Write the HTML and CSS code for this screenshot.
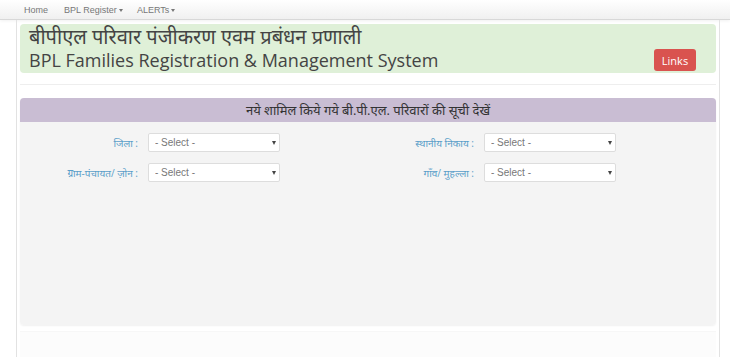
FILE: index.html
```html
<!DOCTYPE html>
<html lang="hi">
<head>
  <meta charset="UTF-8" />
  <title>BPL Families Registration &amp; Management System</title>
  <meta name="viewport" content="width=device-width, initial-scale=1.0">
  <link rel="stylesheet" href="styles.css">
</head>
<body>

  <nav class="navbar">
    <a href="#" class="nav-home">Home</a>
    <a href="#" class="nav-bpl">BPL Register<span class="caret"></span></a>
    <a href="#">ALERTs<span class="caret"></span></a>
  </nav>

  <div class="container">
    <div class="banner">
      <div class="titles">
        <div class="title-hi">बीपीएल परिवार पंजीकरण एवम प्रबंधन प्रणाली</div>
        <div class="title-en">BPL Families Registration &amp; Management System</div>
      </div>
      <button class="btn-links">Links</button>
    </div>

    <hr>

    <div class="panel">
      <div class="panel-heading">नये शामिल किये गये बी.पी.एल. परिवारों की सूची देखें</div>
      <div class="panel-body">
        <div class="form-grid">
          <label>जिला :</label>
          <div class="select-wrap"><select><option>- Select -</option></select></div>
          <label>स्थानीय निकाय :</label>
          <div class="select-wrap"><select><option>- Select -</option></select></div>

          <label>ग्राम-पंचायत/ ज़ोन :</label>
          <div class="select-wrap"><select><option>- Select -</option></select></div>
          <label>गाँव/ मुहल्ला :</label>
          <div class="select-wrap"><select><option>- Select -</option></select></div>
        </div>
      </div>
    </div>

    <div class="footer-well"></div>
  </div>

</body>
</html>
```

FILE: styles.css
```css
body {
  margin: 0;
  background: #fff;
  font-family: 'Open Sans', 'Noto Sans', 'Noto Sans Devanagari', sans-serif;
  color: #333;
}
.navbar {
  height: 19px;
  display: flex;
  align-items: center;
  padding-left: 24px;
  background: linear-gradient(#fff, #f0f0f0);
  border-bottom: 1px solid #d8d8d8;
  box-shadow: 0 1px 3px rgba(0,0,0,0.06);
}
.navbar a {
  color: #777;
  font-family: 'Liberation Sans', sans-serif;
  font-size: 9px;
  text-decoration: none;
}
.nav-home {
  width: 40px;
}
.nav-bpl {
  width: 73px;
}
.caret {
  display: inline-block;
  width: 0;
  height: 0;
  margin-left: 2px;
  vertical-align: middle;
  border-top: 3px solid #777;
  border-left: 2px solid transparent;
  border-right: 2px solid transparent;
}
.container {
  margin: 0 10px 0 16px;
  padding: 4px 3px 0;
  border-left: 1px solid #e2e2e2;
  border-right: 1px solid #e2e2e2;
  min-height: 337px;
}
.banner {
  background: #dff0d8;
  border-radius: 4px;
  height: 48px;
  display: flex;
  align-items: flex-end;
  justify-content: space-between;
  padding: 0 20px 1px 9px;
}
.titles {
  align-self: flex-start;
  padding-top: 1px;
}
.title-hi {
  font-size: 20px;
  line-height: 23px;
  color: #444;
}
.title-en {
  font-size: 18px;
  line-height: 24px;
  color: #444;
}
.btn-links {
  background: #d9534f;
  color: #fff;
  border: none;
  border-radius: 3px;
  width: 42px;
  height: 22px;
  margin-bottom: 1px;
  font-family: 'Open Sans', sans-serif;
  font-size: 11px;
  padding: 0;
}
hr {
  border: none;
  border-top: 1px solid #eee;
  margin: 11px 0 13px;
}
.panel {
  border-radius: 4px;
  overflow: hidden;
  box-shadow: 0 1px 2px rgba(0,0,0,0.06);
}
.panel-heading {
  background: #c9bdd3;
  height: 24px;
  line-height: 24px;
  text-align: center;
  font-size: 13px;
  color: #333;
}
.panel-body {
  background: #f4f4f4;
  height: 203px;
  padding-top: 11px;
  box-sizing: border-box;
}
.form-grid {
  display: grid;
  grid-template-columns: 119px 132px 186px 132px;
  column-gap: 9px;
  row-gap: 11px;
  align-items: center;
}
.form-grid label {
  text-align: right;
  font-size: 10px;
  color: #5a9ec9;
  padding-right: 1px;
}
.select-wrap {
  position: relative;
  height: 19px;
}
.select-wrap::after {
  content: "";
  position: absolute;
  right: 4px;
  top: 8px;
  border-top: 4px solid #444;
  border-left: 2px solid transparent;
  border-right: 2px solid transparent;
  pointer-events: none;
}
.form-grid select {
  appearance: none;
  -webkit-appearance: none;
  display: block;
  height: 19px;
  width: 132px;
  font-size: 10px;
  font-family: 'Liberation Sans', sans-serif;
  color: #777;
  background: #fff;
  border: 1px solid #ddd;
  border-radius: 2px;
  padding: 0 6px;
}
.footer-well {
  margin-top: 6px;
  height: 30px;
  background: #fcfcfc;
  border-top: 1px solid #f7f7f7;
}
```
